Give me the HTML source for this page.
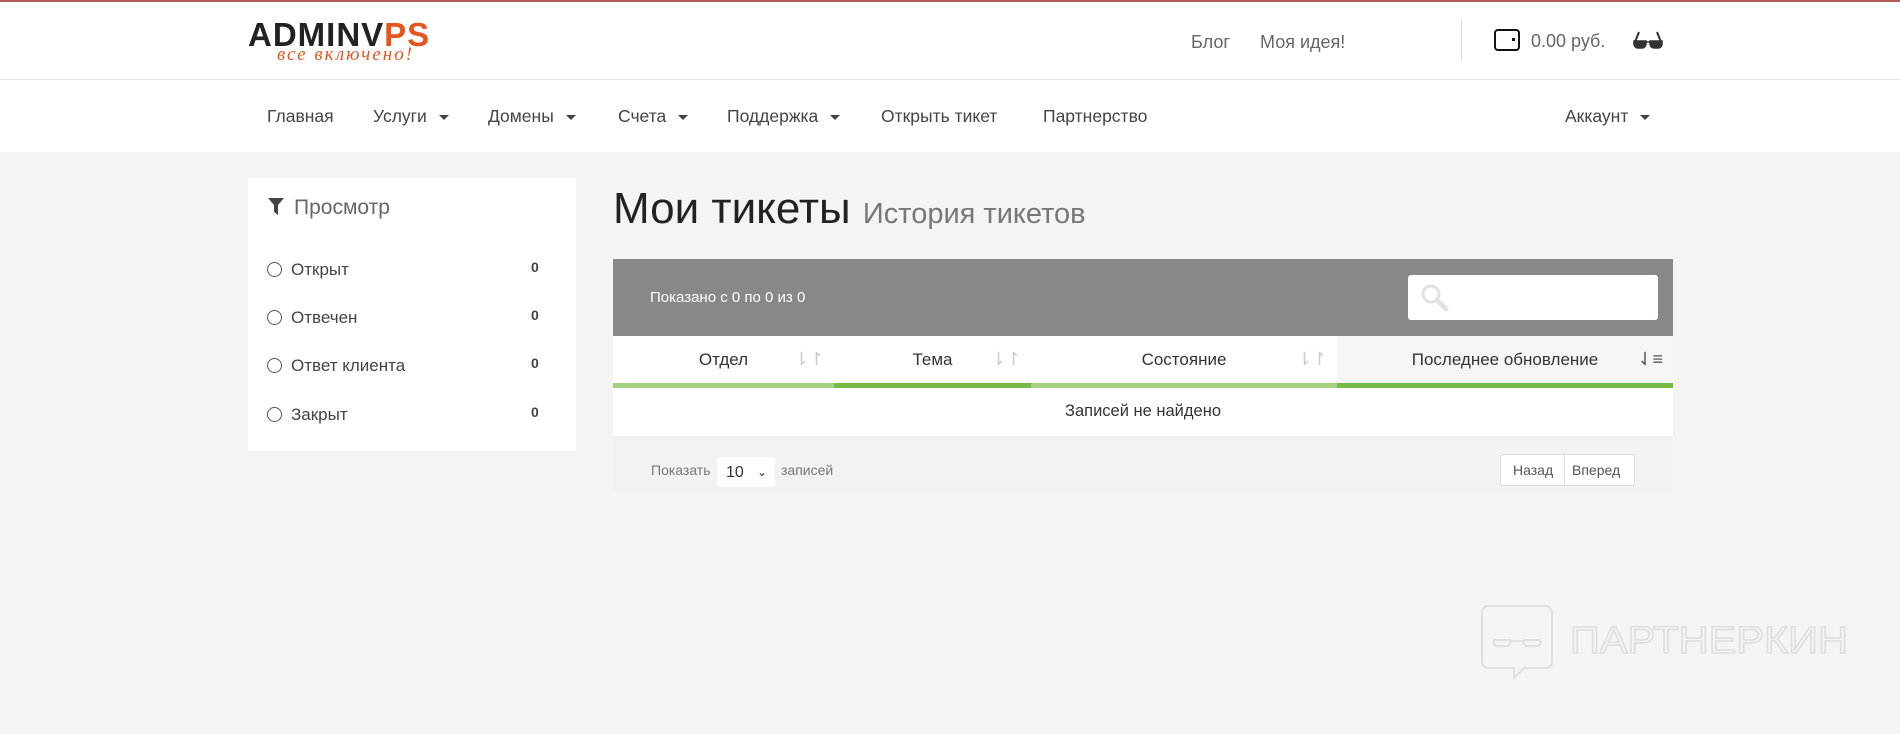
<!DOCTYPE html>
<html><head><meta charset="utf-8"><style>
*{box-sizing:border-box;margin:0;padding:0}
body{width:1900px;height:734px;background:#f5f4f2;font-family:"Liberation Sans","DejaVu Sans",sans-serif;color:#333;position:relative;overflow:hidden}
.abs{position:absolute}
.top{position:absolute;left:0;top:0;width:1900px;height:80px;background:#fff;border-top:2px solid #b35b5b;border-bottom:1px solid #e3e3e3}
.nav{position:absolute;left:0;top:80px;width:1900px;height:72px;background:#fff}
.nav span{position:absolute;top:26px;font-size:17.5px;color:#444}
.car{display:inline-block;width:0;height:0;border-left:5px solid transparent;border-right:5px solid transparent;border-top:5px solid #444;margin-left:12px;vertical-align:middle}
.side{position:absolute;left:248px;top:178px;width:328px;height:273px;background:#fff}
.it{position:absolute;left:19px;font-size:17px;color:#444}
.it i{display:inline-block;width:15px;height:15px;border:1.5px solid #555;border-radius:50%;vertical-align:-2px;margin-right:9px}
.cnt{position:absolute;left:283px;font-size:14px;font-weight:bold;color:#444}
.th{position:absolute;top:336px;height:47px;font-size:17px;color:#333;text-align:center;line-height:47px}
.ar{position:absolute;right:10px;top:0;color:#ccc;font-size:18px}
</style></head><body>
<div class="top"></div>
<div class="abs" style="left:248px;top:16px;font-size:33px;font-weight:bold;letter-spacing:1px;color:#222">ADMIN<span style="color:#222">V</span><span style="color:#e8541e">PS</span></div>
<div class="abs" style="left:277px;top:44px;font-size:19px;font-style:italic;color:#e8541e;font-family:'Liberation Serif',serif;letter-spacing:2px">все включено!</div>
<div class="abs" style="left:1191px;top:32px;font-size:18px;color:#666">Блог</div>
<div class="abs" style="left:1260px;top:32px;font-size:18px;color:#666">Моя идея!</div>
<div class="abs" style="left:1461px;top:19px;width:1px;height:42px;background:#ddd"></div>
<div class="abs" style="left:1494px;top:29px;width:26px;height:22px;border:2.5px solid #111;border-radius:4px"><div style="position:absolute;right:3px;top:7px;width:3px;height:3px;background:#111"></div></div>
<div class="abs" style="left:1531px;top:31px;font-size:18px;color:#666">0.00 руб.</div>
<svg class="abs" style="left:1633px;top:30px" width="30" height="20" viewBox="0 0 30 20"><path d="M2 12 L6 2 M28 12 L24 2" stroke="#333" stroke-width="2" fill="none"/><path d="M1 11h12v3a4 4 0 0 1-4 4H5a4 4 0 0 1-4-4z M17 11h12v3a4 4 0 0 1-4 4h-4a4 4 0 0 1-4-4z M12 12h6" fill="#333" stroke="#333" stroke-width="1.5"/></svg>
<div class="nav">
<span style="left:267px">Главная</span>
<span style="left:373px">Услуги<i class="car"></i></span>
<span style="left:488px">Домены<i class="car"></i></span>
<span style="left:618px">Счета<i class="car"></i></span>
<span style="left:727px">Поддержка<i class="car"></i></span>
<span style="left:881px">Открыть тикет</span>
<span style="left:1043px">Партнерство</span>
<span style="left:1565px">Аккаунт<i class="car"></i></span>
</div>
<div class="side">
<svg class="abs" style="left:20px;top:20px" width="16" height="17" viewBox="0 0 16 17"><path d="M0 0h16L10 7v10L6 14V7z" fill="#444"/></svg>
<div class="abs" style="left:46px;top:18px;font-size:21px;color:#666">Просмотр</div>
<div class="it" style="top:82px"><i></i>Открыт</div><div class="cnt" style="top:81px">0</div>
<div class="it" style="top:130px"><i></i>Отвечен</div><div class="cnt" style="top:129px">0</div>
<div class="it" style="top:178px"><i></i>Ответ клиента</div><div class="cnt" style="top:177px">0</div>
<div class="it" style="top:227px"><i></i>Закрыт</div><div class="cnt" style="top:226px">0</div>
</div>
<div class="abs" style="left:613px;top:184px;font-size:44px;color:#222;white-space:nowrap">Мои тикеты <span style="font-size:29px;color:#777">История тикетов</span></div>
<div class="abs" style="left:613px;top:259px;width:1060px;height:77px;background:#888"></div>
<div class="abs" style="left:650px;top:289px;font-size:15px;color:#fff">Показано с 0 по 0 из 0</div>
<div class="abs" style="left:1408px;top:275px;width:250px;height:45px;background:#fff;border-radius:3px"></div>
<svg class="abs" style="left:1420px;top:283px" width="30" height="30" viewBox="0 0 30 30"><circle cx="11" cy="11" r="8" fill="none" stroke="#e2e2e2" stroke-width="3"/><path d="M17 17l9 9" stroke="#e2e2e2" stroke-width="5" stroke-linecap="round"/></svg>
<div class="abs" style="left:613px;top:336px;width:1060px;height:100px;background:#fff"></div>
<div class="abs" style="left:1337px;top:336px;width:336px;height:47px;background:#f5f5f5"></div>
<div class="th" style="left:613px;width:221px">Отдел<span class="ar">⇂↾</span></div>
<div class="th" style="left:834px;width:197px">Тема<span class="ar">⇂↾</span></div>
<div class="th" style="left:1031px;width:306px">Состояние<span class="ar">⇂↾</span></div>
<div class="th" style="left:1337px;width:336px">Последнее обновление<span class="ar" style="color:#555">⇃≡</span></div>
<div class="abs" style="left:613px;top:383px;width:221px;height:5px;background:#a3d17f"></div>
<div class="abs" style="left:834px;top:383px;width:197px;height:5px;background:#78b845"></div>
<div class="abs" style="left:1031px;top:383px;width:306px;height:5px;background:#a3d17f"></div>
<div class="abs" style="left:1337px;top:383px;width:336px;height:5px;background:#78b845"></div>
<div class="abs" style="left:613px;top:402px;width:1060px;text-align:center;font-size:16.5px;color:#333">Записей не найдено</div>
<div class="abs" style="left:613px;top:436px;width:1060px;height:57px;background:#f2f2f2"></div>
<div class="abs" style="left:651px;top:462px;font-size:14px;color:#777">Показать</div>
<div class="abs" style="left:717px;top:457px;width:58px;height:30px;background:#fff;border-radius:3px;font-size:16px;line-height:32px;padding-left:9px;color:#333">10 <span style="position:absolute;right:8px;top:-1px;font-size:12px">&#8964;</span></div>
<div class="abs" style="left:781px;top:462px;font-size:14px;color:#777">записей</div>
<div class="abs" style="left:1500px;top:454px;width:135px;height:32px;background:#fff;border:1px solid #ddd;border-radius:3px;font-size:14px;color:#555;line-height:30px"><span style="position:absolute;left:12px">Назад</span><span style="position:absolute;left:63px;top:0;width:1px;height:30px;background:#ddd"></span><span style="position:absolute;left:71px">Вперед</span></div>
<svg class="abs" style="left:1472px;top:600px" width="380" height="82" viewBox="0 0 380 82" fill="none" stroke="#e0e0e0" stroke-width="2"><path d="M16 6h58a6 6 0 0 1 6 6v50a6 6 0 0 1-6 6H52L42 78V68H16a6 6 0 0 1-6-6V12a6 6 0 0 1 6-6z"/><path d="M22 40h16a4 4 0 0 1-4 6h-8a4 4 0 0 1-4-6zM52 40h16a4 4 0 0 1-4 6h-8a4 4 0 0 1-4-6zM38 41h14"/><text x="98" y="53" font-size="38" font-family="Liberation Sans" fill="none" stroke="#dedede" stroke-width="1.5" textLength="278" lengthAdjust="spacingAndGlyphs">ПАРТНЕРКИН</text></svg>
</body></html>
